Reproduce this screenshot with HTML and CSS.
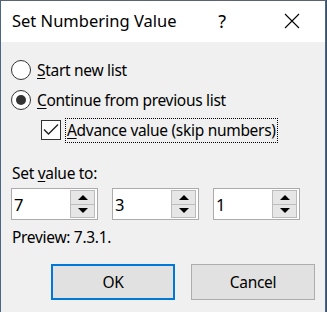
FILE: index.html
```html
<!DOCTYPE html>
<html>
<head>
<meta charset="utf-8">
<link rel="stylesheet" href="styles.css">
</head>
<body>
<div class="window">
  <div class="titlebar">
    <span class="title">Set Numbering Value</span>
    <span class="help">?</span>
    <span class="close"><svg width="16" height="16" viewBox="0 0 16 16"><path d="M1 1 L15 15 M15 1 L1 15" stroke="#000" stroke-width="1.1" fill="none"/></svg></span>
  </div>
  <div class="content">
    <div class="option"><span class="radio"></span><span class="text"><u>S</u>tart new list</span></div>
    <div class="option"><span class="radio checked"></span><span class="text"><u>C</u>ontinue from previous list</span></div>
    <div class="option sub"><span class="check"><svg width="18" height="18" viewBox="0 0 18 18"><path d="M2 8.5 L6.5 13 L16 3.5" stroke="#222" stroke-width="1.4" fill="none"/></svg></span><span class="text focus"><u>A</u>dvance value (skip numbers)</span></div>
    <div class="label">Set <u>v</u>alue to:</div>
    <div class="spins">
      <div class="spin"><span class="val">7</span><span class="arrows"><span class="arrow"><i class="up"></i></span><span class="arrow"><i class="down"></i></span></span></div>
      <div class="spin"><span class="val">3</span><span class="arrows"><span class="arrow"><i class="up"></i></span><span class="arrow"><i class="down"></i></span></span></div>
      <div class="spin"><span class="val">1</span><span class="arrows"><span class="arrow"><i class="up"></i></span><span class="arrow"><i class="down"></i></span></span></div>
    </div>
    <div class="preview">Preview: 7.3.1.</div>
    <div class="buttons">
      <div class="btn default">OK</div>
      <div class="btn">Cancel</div>
    </div>
  </div>
</div>
</body>
</html>
```
FILE: styles.css
```css
html, body {
  margin: 0;
  padding: 0;
  background: #3b4f68;
}
body {
  font-family: "Noto Sans", "Open Sans", sans-serif;
  font-size: 15.5px;
  letter-spacing: -0.3px;
  color: #000;
}
.window {
  width: 326px;
  height: 312px;
  box-sizing: border-box;
  border: 1px solid #4a6585;
  border-bottom: none;
  border-top-color: #5a6470;
  background: #f0f0f0;
  overflow: hidden;
}
.titlebar {
  height: 41px;
  background: #fff;
  display: flex;
  align-items: center;
  padding-left: 11px;
}
.title {
  flex: 1;
  font-size: 16.5px;
  letter-spacing: 0;
  line-height: 20px;
  padding-bottom: 2px;
}
.help {
  width: 74px;
  text-align: center;
  font-size: 18px;
  line-height: 20px;
  padding-bottom: 2px;
}
.close {
  width: 66px;
  display: flex;
  justify-content: center;
  padding-bottom: 2px;
}
.close svg { display: block; }
.content {
  padding: 13px 10px 0 10px;
}
u {
  text-decoration: underline;
  text-underline-offset: 2px;
  text-decoration-thickness: 1px;
}
.option {
  height: 30px;
  display: flex;
  align-items: center;
}
.option .text {
  margin-left: 6px;
  line-height: 20px;
}
.option.sub {
  padding-left: 30px;
}
.radio {
  width: 20px;
  height: 20px;
  box-sizing: border-box;
  border: 1px solid #333;
  border-radius: 50%;
  background: #fff;
  display: flex;
  align-items: center;
  justify-content: center;
}
.radio.checked::after {
  content: "";
  width: 10px;
  height: 10px;
  border-radius: 50%;
  background: #333;
}
.check {
  width: 20px;
  height: 20px;
  box-sizing: border-box;
  border: 1px solid #333;
  background: #fff;
  display: flex;
  align-items: center;
  justify-content: center;
}
.check svg { display: block; }
.option .text.focus {
  margin-left: 4px;
  border: 1px dotted #000;
  padding: 1px 1px 2px 1px;
  line-height: 20px;
}
.label {
  margin-top: 18px;
  line-height: 20px;
  padding-left: 1px;
}
.spins {
  margin-top: 5px;
  display: flex;
  gap: 14px;
}
.spin {
  width: 87px;
  height: 32px;
  box-sizing: border-box;
  border: 1px solid #ababab;
  background: #fff;
  display: flex;
  padding: 1px 2px 1px 0;
}
.val {
  flex: 1;
  padding-left: 2px;
  display: flex;
  align-items: center;
  font-size: 16.5px;
}
.arrows {
  width: 25px;
  display: flex;
  flex-direction: column;
}
.arrow {
  flex: 1;
  box-sizing: border-box;
  border: 1px solid #bcbcbc;
  background: #e6e6e6;
  display: flex;
  align-items: center;
  justify-content: center;
}
.arrow + .arrow { border-top: none; }
.up {
  width: 0;
  height: 0;
  border-left: 5px solid transparent;
  border-right: 5px solid transparent;
  border-bottom: 5px solid #000;
}
.down {
  width: 0;
  height: 0;
  border-left: 5px solid transparent;
  border-right: 5px solid transparent;
  border-top: 5px solid #000;
}
.preview {
  margin-top: 7px;
  line-height: 20px;
  padding-left: 1px;
}
.buttons {
  margin-top: 17px;
  display: flex;
  justify-content: flex-end;
  gap: 16px;
}
.btn {
  width: 124px;
  height: 36px;
  box-sizing: border-box;
  border: 1px solid #adadad;
  background: #e1e1e1;
  display: flex;
  align-items: center;
  justify-content: center;
  line-height: 20px;
}
.btn.default {
  border: 2px solid #0078d7;
}
```
